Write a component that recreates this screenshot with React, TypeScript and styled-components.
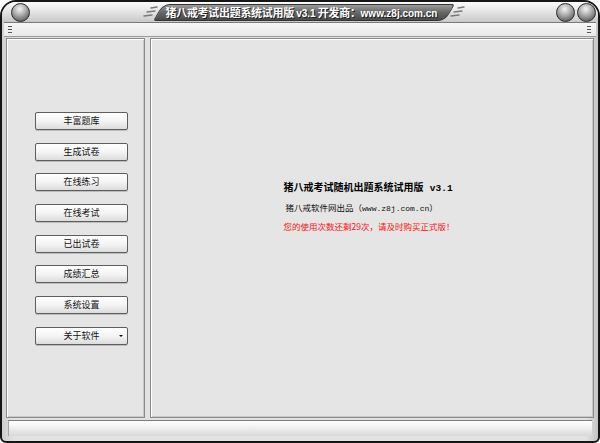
import styled, { createGlobalStyle } from "styled-components";

const GlobalStyle = createGlobalStyle`
  html, body {
    margin: 0;
    padding: 0;
    background: #ffffff;
  }
`;

const menuItems = [
  "丰富题库",
  "生成试卷",
  "在线练习",
  "在线考试",
  "已出试卷",
  "成绩汇总",
  "系统设置",
];

const SpeedLines = () => (
  <svg width="16" height="14" viewBox="0 0 16 14">
    <g stroke="#7a7a7a" strokeWidth="1.4" strokeLinecap="round">
      <line x1="9" y1="3" x2="15" y2="2" />
      <line x1="5" y1="7" x2="13" y2="6" />
      <line x1="2" y1="11" x2="10" y2="10" />
    </g>
  </svg>
);

const Grip = () => (
  <svg width="5" height="8" viewBox="0 0 5 8">
    <g fill="#555">
      <rect x="0" y="0" width="4" height="1" />
      <rect x="0" y="3" width="4" height="1" />
      <rect x="0" y="6" width="4" height="1" />
    </g>
  </svg>
);

const App = () => {
  return (
    <>
      <GlobalStyle />
      <Window>
        <TitleBar>
          <TitleSide>
            <Orb />
          </TitleSide>
          <TitleCenter>
            <SpeedLines />
            <TitleTab>
              猪八戒考试出题系统试用版 <Small>v3.1</Small> 开发商：<Small>www.z8j.com.cn</Small>
            </TitleTab>
            <SpeedLines />
          </TitleCenter>
          <TitleSide $end>
            <Orb />
            <Orb />
          </TitleSide>
        </TitleBar>
        <ToolStrip>
          <Grip />
          <Grip />
        </ToolStrip>
        <Body>
          <SidePanel>
            {menuItems.map((item) => (
              <MenuButton key={item}>{item}</MenuButton>
            ))}
            <MenuButton $dropdown>
              关于软件
              <Caret />
            </MenuButton>
          </SidePanel>
          <MainPanel>
            <InfoBlock>
              <InfoTitle>
                猪八戒考试随机出题系统试用版 <Version>v3.1</Version>
              </InfoTitle>
              <InfoLine>
                猪八戒软件网出品（<Mono>www.z8j.com.cn</Mono>）
              </InfoLine>
              <InfoLine $warn>您的使用次数还剩29次，请及时购买正式版！</InfoLine>
            </InfoBlock>
          </MainPanel>
        </Body>
        <StatusBar />
      </Window>
    </>
  );
};

const Window = styled.div`
  width: 600px;
  height: 443px;
  box-sizing: border-box;
  border: 2px solid #161616;
  border-radius: 16px 16px 6px 6px;
  background: linear-gradient(90deg, #cfcfcf, #e2e2e2 2%, #e2e2e2 98%, #c4c4c4);
  padding: 0 4px 5px;
  display: flex;
  flex-direction: column;
  overflow: hidden;
`;

const TitleBar = styled.div`
  height: 20px;
  margin: 0 -4px;
  padding: 0 2px 0 9px;
  display: grid;
  grid-template-columns: 1fr auto 1fr;
  align-items: center;
  background: linear-gradient(#fbfbfb, #e6e6e6 45%, #c9c9c9);
`;

const TitleSide = styled.div<{ $end?: boolean }>`
  display: flex;
  gap: 2px;
  justify-content: ${(p) => (p.$end ? "flex-end" : "flex-start")};
`;

const Orb = styled.div`
  width: 17px;
  height: 17px;
  border-radius: 50%;
  border: 1px solid #2c2c2c;
  background: radial-gradient(circle at 45% 30%, #f4f4f4 0, #b8b8b8 35%, #6c6c6c 75%, #4a4a4a 100%);
`;

const TitleCenter = styled.div`
  display: flex;
  align-items: center;
`;

const TitleTab = styled.div`
  position: relative;
  isolation: isolate;
  height: 17px;
  line-height: 17px;
  padding: 0 12px 0 8px;
  margin-top: 1px;
  color: #ffffff;
  font: bold 11px "Noto Sans CJK SC", sans-serif;
  letter-spacing: -0.3px;
  white-space: nowrap;
  text-shadow: 1px 1px 0 #1e1e1e;

  &::before {
    content: "";
    position: absolute;
    inset: 0;
    z-index: -1;
    border: 1px solid #333;
    border-radius: 7px 3px 7px 3px;
    background: linear-gradient(#9c9c9c, #6a6a6a 45%, #4a4a4a);
    transform: skewX(-30deg);
  }
`;

const Small = styled.span`
  font: bold 10px "Liberation Sans", sans-serif;
  letter-spacing: 0;
`;

const ToolStrip = styled.div`
  height: 13px;
  margin: 0 -2px;
  padding: 0 4px;
  border-top: 1px solid #7a7a7a;
  border-bottom: 1px solid #9a9a9a;
  background: linear-gradient(#f6f6f6, #e9e9e9);
  display: flex;
  align-items: center;
  justify-content: space-between;
`;

const Body = styled.div`
  flex: 1;
  margin-top: 1px;
  display: flex;
  gap: 5px;
`;

const Panel = styled.div`
  box-sizing: border-box;
  border: 1px solid #8a8a8a;
  box-shadow: inset 1px 1px 0 #ffffff, inset -1px -1px 0 #c8c8c8;
  background: #e5e5e5;
`;

const SidePanel = styled(Panel)`
  width: 139px;
  padding: 73px 0 0 12px;
  display: flex;
  flex-direction: column;
  align-items: center;
  gap: 12.7px;
`;

const MenuButton = styled.button<{ $dropdown?: boolean }>`
  position: relative;
  width: 93px;
  height: 18px;
  padding: 0;
  box-sizing: border-box;
  border: 1px solid #5e5e5e;
  border-radius: 2px;
  background: linear-gradient(#ffffff, #f4f4f4 50%, #dcdcdc);
  box-shadow: 0 1px 0 #bdbdbd;
  color: #111;
  font: 9px "Noto Sans CJK SC", sans-serif;
  line-height: 16px;
  cursor: pointer;
`;

const Caret = styled.span`
  position: absolute;
  right: 4px;
  top: 7px;
  width: 0;
  height: 0;
  border-left: 2px solid transparent;
  border-right: 2px solid transparent;
  border-top: 2px solid #111;
`;

const MainPanel = styled(Panel)`
  flex: 1;
  display: flex;
  align-items: center;
  justify-content: center;
  padding: 0 0 40px 0;
`;

const InfoBlock = styled.div`
  display: flex;
  flex-direction: column;
  margin-right: 6px;
`;

const InfoTitle = styled.div`
  font: bold 10px "Noto Sans CJK SC", sans-serif;
  color: #000;
  line-height: 14px;
  margin-bottom: 7px;
`;

const Version = styled.span`
  font: bold 9.5px "Liberation Mono", monospace;
  margin-left: 4px;
`;

const InfoLine = styled.div<{ $warn?: boolean }>`
  font: 8.5px "Noto Sans CJK SC", sans-serif;
  color: ${(p) => (p.$warn ? "#ff1010" : "#111")};
  line-height: 12px;
  margin-bottom: 5px;
  padding-left: ${(p) => (p.$warn ? "0" : "2px")};
`;

const Mono = styled.span`
  font-family: "Liberation Mono", monospace;
  font-size: 8px;
`;

const StatusBar = styled.div`
  height: 15px;
  margin: 2px 2px 0;
  border-top: 1px solid #7c7c7c;
  border-left: 1px solid #a8a8a8;
  background: linear-gradient(#ffffff, #f2f2f2 40%, #d8d8d8);
`;

export default App;
